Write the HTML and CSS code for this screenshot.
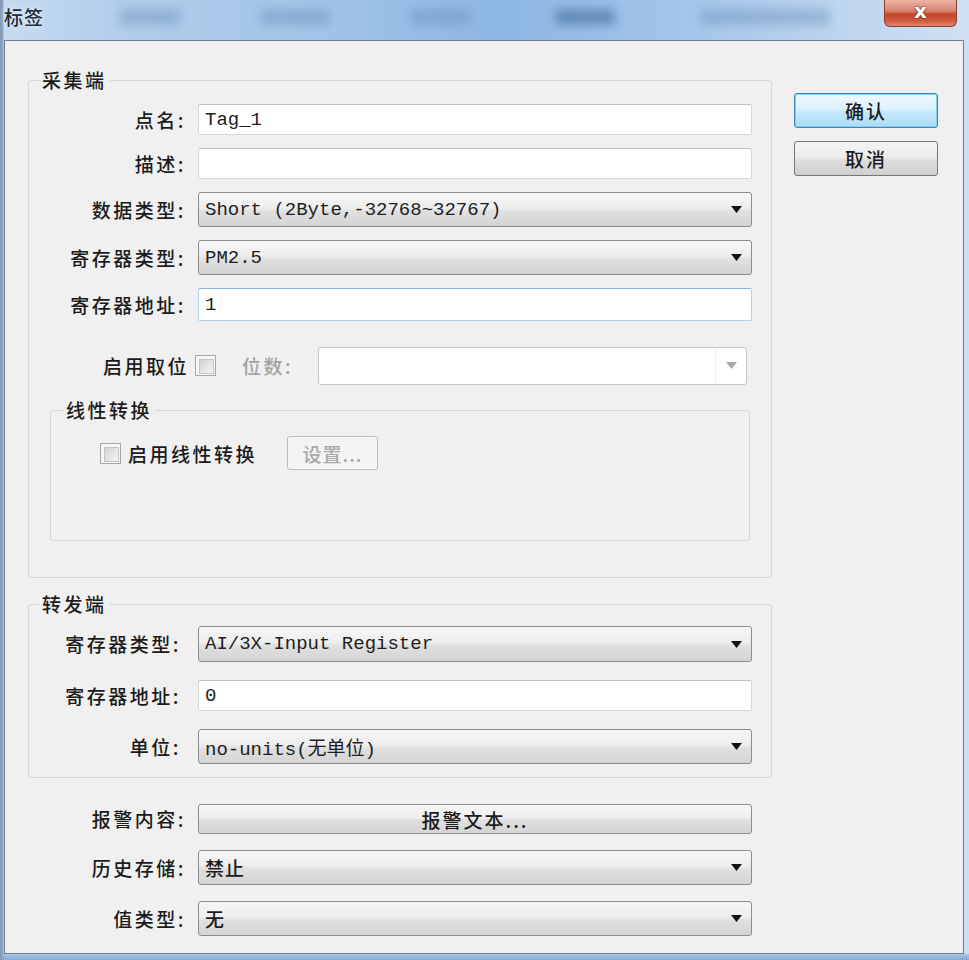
FILE: index.html
```html
<!DOCTYPE html>
<html lang="zh-CN">
<head>
<meta charset="utf-8">
<title>标签</title>
<link rel="stylesheet" href="styles.css">
</head>
<body>
<div class="window">
  <div class="titlebar">
    <span class="title">标签</span>
    <div class="ghosts" aria-hidden="true">
      <span class="ghost g1"></span>
      <span class="ghost g2"></span>
      <span class="ghost g3"></span>
      <span class="ghost g4"></span>
      <span class="ghost g5"></span>
    </div>
    <div class="close">x</div>
  </div>

  <div class="client">
    <div class="main">
      <fieldset class="group collect">
        <legend>采集端</legend>
        <div class="form">
          <span class="lbl">点名:</span>
          <div class="edit mono">Tag_1</div>

          <span class="lbl">描述:</span>
          <div class="edit mono"></div>

          <span class="lbl">数据类型:</span>
          <div class="combo"><span class="val mono">Short (2Byte,-32768~32767)</span><svg class="arrow" viewBox="0 0 11 7"><path d="M0 0H11L5.5 7Z" fill="#111"/></svg></div>

          <span class="lbl">寄存器类型:</span>
          <div class="combo"><span class="val mono">PM2.5</span><svg class="arrow" viewBox="0 0 11 7"><path d="M0 0H11L5.5 7Z" fill="#111"/></svg></div>

          <span class="lbl">寄存器地址:</span>
          <div class="edit focus mono">1</div>
        </div>

        <div class="bitrow">
          <span class="bitlbl">启用取位</span>
          <span class="check"></span>
          <span class="dimlbl">位数:</span>
          <div class="dcombo"><span class="dbtn"><svg class="arrow" viewBox="0 0 11 7"><path d="M0 0H11L5.5 7Z" fill="#a8a8a8"/></svg></span></div>
        </div>

        <fieldset class="group linear">
          <legend>线性转换</legend>
          <div class="linrow">
            <span class="check"></span>
            <span class="chktext">启用线性转换</span>
            <span class="dbutton">设置...</span>
          </div>
        </fieldset>
      </fieldset>

      <fieldset class="group forward">
        <legend>转发端</legend>
        <div class="form">
          <span class="lbl">寄存器类型:</span>
          <div class="combo tall"><span class="val mono">AI/3X-Input Register</span><svg class="arrow" viewBox="0 0 11 7"><path d="M0 0H11L5.5 7Z" fill="#111"/></svg></div>

          <span class="lbl">寄存器地址:</span>
          <div class="edit mono">0</div>

          <span class="lbl">单位:</span>
          <div class="combo"><span class="val mono">no-units(无单位)</span><svg class="arrow" viewBox="0 0 11 7"><path d="M0 0H11L5.5 7Z" fill="#111"/></svg></div>
        </div>
      </fieldset>

      <div class="form bottom">
        <span class="lbl">报警内容:</span>
        <div class="pbtn">报警文本...</div>

        <span class="lbl">历史存储:</span>
        <div class="combo"><span class="val">禁止</span><svg class="arrow" viewBox="0 0 11 7"><path d="M0 0H11L5.5 7Z" fill="#111"/></svg></div>

        <span class="lbl">值类型:</span>
        <div class="combo"><span class="val">无</span><svg class="arrow" viewBox="0 0 11 7"><path d="M0 0H11L5.5 7Z" fill="#111"/></svg></div>
      </div>
    </div>

    <div class="actions">
      <div class="btn default">确认</div>
      <div class="btn">取消</div>
    </div>
  </div>
</div>
</body>
</html>
```

FILE: styles.css
```css
* { box-sizing: border-box; }
html, body { margin: 0; padding: 0; }
body {
  width: 969px;
  height: 960px;
  overflow: hidden;
  font-family: "Noto Sans CJK SC", "Noto Sans", sans-serif;
  font-weight: 500;
  color: #1b1b1b;
}

.window {
  width: 969px;
  height: 960px;
  display: flex;
  flex-direction: column;
  background:
    linear-gradient(90deg, #7f98b4 0, #8fa9c6 3px, transparent 4px),
    linear-gradient(0deg, #86a9d0 0, #a9c6e6 6px, transparent 7px),
    linear-gradient(90deg, #c6dbf0 0%, #b2ceeb 12%, #9fc2e7 35%, #8db6e3 52%, #a5c6ea 72%, #bfd6ef 88%, #cfe0f3 100%);
}

/* title bar */
.titlebar {
  height: 40px;
  flex: none;
  display: flex;
  align-items: flex-start;
}
.title {
  font-size: 19px;
  line-height: 22px;
  margin: 6px 0 0 4px;
  letter-spacing: 1px;
  color: #1d2b3b;
  text-shadow: 0 0 6px rgba(255, 255, 255, 0.9);
}
.ghosts {
  display: flex;
  margin-top: 9px;
}
.ghost {
  height: 16px;
  border-radius: 4px;
  background: #6e92bb;
  opacity: 0.45;
  filter: blur(5px);
}
.g1 { width: 60px; margin-left: 76px; }
.g2 { width: 70px; margin-left: 80px; }
.g3 { width: 60px; margin-left: 80px; }
.g4 { width: 60px; margin-left: 85px; background: #46709e; opacity: 0.6; }
.g5 { width: 130px; margin-left: 85px; }

.close {
  margin-left: auto;
  margin-right: 12px;
  width: 73px;
  height: 27px;
  border: 1px solid #8e3b2b;
  border-top: none;
  border-radius: 0 0 6px 6px;
  background: linear-gradient(#eab2a2 0%, #d98470 42%, #c5452b 55%, #cf5a40 80%, #e08a70 100%);
  color: #fff;
  font-family: "DejaVu Sans", sans-serif;
  font-weight: bold;
  font-size: 20px;
  line-height: 22px;
  text-align: center;
  text-shadow: 0 0 2px #5a1e12, 0 0 1px #5a1e12;
}

/* client area */
.client {
  flex: 1;
  margin: 0 5px 6px 4px;
  border: 1px solid #6f7f91;
  background: #f0f0f0;
  display: flex;
  align-items: flex-start;
  padding-left: 23px;
}
.main {
  width: 744px;
  padding-top: 28px;
}

/* group boxes */
.group {
  margin: 0;
  padding: 0;
  min-width: 0;
  border: 1px solid #d6d6d6;
  border-radius: 3px;
}
.group legend {
  padding: 0 3px;
  margin-left: 10px;
  font-size: 19px;
  line-height: 22px;
  letter-spacing: 2.5px;
}
.collect { padding: 13px 0 36px 0; }
.forward { margin-top: 15px; padding: 11px 19px 13px 0; }
.linear { margin: 15px 21px 0 21px; padding: 15px 0 70px 0; }
.linear legend { margin-left: 12px; }

/* form grid */
.form {
  display: grid;
  grid-template-columns: 157px 1fr;
  column-gap: 12px;
  row-gap: 13px;
  align-items: center;
}
.collect .form { margin-right: 19px; }
.forward .form { row-gap: 18px; }
.forward .lbl { padding-right: 5px; }
.form.bottom {
  margin-top: 26px;
  padding: 0 20px 0 1px;
  row-gap: 16px;
}

.lbl {
  text-align: right;
  font-size: 19px;
  line-height: 22px;
  letter-spacing: 2.5px;
  white-space: nowrap;
}

.mono {
  font-family: "Liberation Mono", "Noto Sans CJK SC", monospace;
  font-weight: 400;
  font-size: 19px;
  color: #1e1e1e;
}

.edit {
  height: 31px;
  background: #fff;
  border: 1px solid #d6d6d6;
  border-top-color: #c2c2c2;
  border-radius: 2px;
  display: flex;
  align-items: center;
  padding-left: 6px;
}
.edit.focus {
  height: 33px;
  border-color: #b3d0ee;
  border-top-color: #8db5de;
}

.combo {
  height: 35px;
  border: 1px solid #8c8c8c;
  border-radius: 3px;
  background: linear-gradient(#f6f6f6 0%, #eeeeee 45%, #e0e0e0 55%, #d4d4d4 100%);
  display: flex;
  align-items: center;
  padding: 0 9px 0 6px;
  font-size: 19px;
  white-space: nowrap;
}
.combo.tall { height: 36px; }
.combo .val { flex: 1; letter-spacing: 1px; }
.combo .val.mono { letter-spacing: 0; }
.arrow { width: 11px; height: 7px; flex: none; }

.pbtn {
  height: 30px;
  border: 1px solid #8c8c8c;
  border-radius: 3px;
  background: linear-gradient(#f6f6f6 0%, #eeeeee 45%, #e0e0e0 55%, #d4d4d4 100%);
  display: flex;
  align-items: center;
  justify-content: center;
  font-size: 19px;
  letter-spacing: 2px;
}

/* bit row */
.bitrow {
  display: flex;
  align-items: center;
  height: 37px;
  margin-top: 26px;
  padding-left: 74px;
  padding-right: 24px;
}
.bitlbl {
  font-size: 19px;
  letter-spacing: 2.5px;
  line-height: 22px;
}
.bitrow .check { margin-left: 6px; }
.dimlbl {
  margin-left: 26px;
  font-size: 19px;
  letter-spacing: 2.5px;
  color: #a2a2a2;
}
.dcombo {
  flex: 1;
  height: 38px;
  margin-left: 25px;
  border: 1px solid #c6c6c6;
  border-radius: 3px;
  background: #fff;
  display: flex;
  justify-content: flex-end;
}
.dbtn {
  width: 31px;
  border-left: 1px solid #f0f0f0;
  display: flex;
  align-items: center;
  justify-content: center;
}

/* checkbox */
.check {
  width: 21px;
  height: 21px;
  flex: none;
  border: 1px solid #a6a6a6;
  background: #f6f6f6;
  padding: 3px;
}
.check::after {
  content: "";
  display: block;
  width: 100%;
  height: 100%;
  border: 1px solid #c4c4c4;
  background: linear-gradient(135deg, #d2d2d2, #f5f5f5);
}

/* linear row */
.linrow {
  display: flex;
  align-items: center;
  height: 34px;
  padding-left: 49px;
}
.chktext {
  margin-left: 7px;
  font-size: 19px;
  letter-spacing: 2.5px;
}
.dbutton {
  margin-left: 30px;
  width: 91px;
  height: 34px;
  border: 1px solid #bcbcbc;
  border-radius: 3px;
  background: #f4f4f4;
  color: #a8a8a8;
  font-size: 19px;
  letter-spacing: 1px;
  display: flex;
  align-items: center;
  justify-content: center;
}

/* action buttons */
.actions {
  margin-left: 22px;
  padding-top: 52px;
  width: 144px;
  display: flex;
  flex-direction: column;
  gap: 13px;
}
.btn {
  height: 35px;
  border: 1px solid #757575;
  border-radius: 3px;
  background: linear-gradient(#f4f4f4 0%, #ececec 45%, #dedede 55%, #d0d0d0 100%);
  display: flex;
  align-items: center;
  justify-content: center;
  font-size: 19px;
  letter-spacing: 2px;
}
.btn.default {
  border-color: #3c86b8;
  box-shadow: inset 0 0 0 1px #7fd0f3;
  background: linear-gradient(#eef8fe 0%, #dcf1fc 45%, #c3e8fd 55%, #addcf6 100%);
}
```
